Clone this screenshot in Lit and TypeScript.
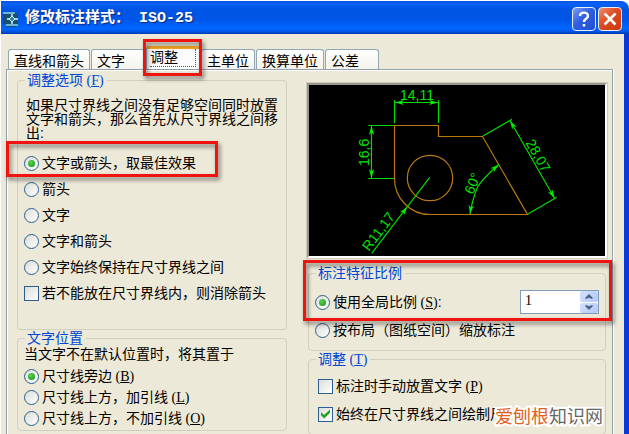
import { LitElement, html, css, svg, nothing } from "lit";
import { customElement, property, state } from "lit/decorators.js";
import { classMap } from "lit/directives/class-map.js";

interface Choice {
  label: string;
  key?: string;
  tail?: string;
}

const TABS = ["直线和箭头", "文字", "调整", "主单位", "换算单位", "公差"];

const FIT: Choice[] = [
  { label: "文字或箭头，取最佳效果" },
  { label: "箭头" },
  { label: "文字" },
  { label: "文字和箭头" },
  { label: "文字始终保持在尺寸界线之间" },
];

const PLACEMENT: Choice[] = [
  { label: "尺寸线旁边", key: "B" },
  { label: "尺寸线上方，加引线", key: "L" },
  { label: "尺寸线上方，不加引线", key: "O" },
];

const caption = (c: Choice) =>
  html`<span>${c.label}${c.key
      ? html`<span class="key"> (<u>${c.key}</u>)</span>`
      : nothing}${c.tail ?? nothing}</span>`;

const controls = css`
  * {
    box-sizing: border-box;
  }
  .key {
    font-family: "Liberation Serif", serif;
  }
  .mark {
    position: absolute;
    border: 3px solid #f01410;
    filter: drop-shadow(2px 3px 2px rgba(0, 0, 0, 0.5));
    pointer-events: none;
    z-index: 2;
  }
`;

/** Drawing with the dimensions in the current style. */
@customElement("dimension-preview")
export class DimensionPreview extends LitElement {
  static styles = css`
    :host {
      display: block;
      background: #000;
      border: 3px solid;
      border-color: #98958a #fff #fff #98958a;
      outline: 1px solid #cfccbd;
      outline-offset: -1px;
    }
    svg {
      display: block;
      width: 100%;
      height: auto;
    }
    .shape {
      fill: none;
      stroke: #b87a10;
      stroke-width: 1.2;
    }
    .dim {
      fill: none;
      stroke: #00dc00;
      stroke-width: 1.2;
    }
    .tip {
      fill: #00f000;
    }
    text {
      fill: #00e600;
      font: 14px "Liberation Sans", sans-serif;
    }
  `;

  private tip(x: number, y: number, angle: number) {
    return svg`<path class="tip" transform="translate(${x} ${y}) rotate(${angle})" d="M0 0L-9 -2.6L-6.5 0L-9 2.6Z"/>`;
  }

  render() {
    return html`<svg viewBox="-1 0 296 171" role="img" aria-label="标注预览">
      <path class="shape" d="M84.5 40.5H128.5V51.5H172.5L217.5 129.5H120A35.5 36 0 0 1 84.5 93.5Z" />
      <circle class="shape" cx="120" cy="93" r="22.7" />
      <path class="dim" d="M84.5 38V15M128.5 38V15M84.5 17.5H128.5" />
      <path class="dim" d="M84 40.5H58.5M84 93.5H58.5M61.5 40.5V93.5" />
      <path class="dim" d="M173 51L202 34.3M218 129L246.7 112.3M200 35.5L244.7 113.5" />
      <path class="dim" d="M160 129Q163 112 167.7 101.7Q175 91 189 79.5" />
      <path class="dim" d="M61.7 168.3L119.7 92.3" />
      ${this.tip(85, 17.5, 180)} ${this.tip(128, 17.5, 0)}
      ${this.tip(61.5, 41, -90)} ${this.tip(61.5, 93, 90)}
      ${this.tip(200, 35.5, -120)} ${this.tip(244.7, 113.5, 60)}
      ${this.tip(160, 129, 98)} ${this.tip(189, 79.5, -40)}
      ${this.tip(97.3, 121.7, -53)}
      <text x="90" y="15">14,11</text>
      <text transform="translate(58.5 81) rotate(-90)">16,6</text>
      <text transform="translate(224 73) rotate(60)" text-anchor="middle">28,07</text>
      <text transform="translate(163 110) rotate(-68)">60°</text>
      <text transform="translate(59 167) rotate(-53)">R11,17</text>
    </svg>`;
  }
}

/** Scale value with up and down buttons. */
@customElement("spin-box")
export class SpinBox extends LitElement {
  @property({ type: Number }) value = 1;

  static styles = css`
    :host {
      display: flex;
      width: 79px;
      height: 24px;
      border: 1px solid #7f9db9;
      background: #fff;
    }
    input {
      flex: 1;
      min-width: 0;
      padding: 0 4px 3px;
      border: 0;
      outline: 0;
      background: none;
      font: 14px "Liberation Serif", serif;
      color: #000;
    }
    .steps {
      display: grid;
      grid-template-rows: 1fr 1fr;
      gap: 1px;
      width: 18px;
    }
    button {
      display: grid;
      place-items: center;
      padding: 0;
      border: 0;
      border-radius: 2px;
      background: linear-gradient(135deg, #d3e0fd, #b4c8f6);
    }
    svg {
      width: 8px;
      height: 5px;
      fill: #4d6185;
    }
  `;

  render() {
    return html`
      <input type="text" aria-label="使用全局比例" .value=${String(this.value)} />
      <span class="steps">
        <button aria-label="增加" @click=${() => this.value++}>
          <svg viewBox="0 0 8 5"><path d="M4 0L8 4L7 5L4 3.8L1 5L0 4Z" /></svg>
        </button>
        <button aria-label="减少" @click=${() => this.value--}>
          <svg viewBox="0 0 8 5"><path d="M4 5L8 1L7 0L4 1.2L1 0L0 1Z" /></svg>
        </button>
      </span>
    `;
  }
}

@customElement("app-root")
export class AppRoot extends LitElement {
  @state() private tab = 2;

  static styles = [
    controls,
    css`
      :host {
        display: flex;
        flex-direction: column;
        position: relative;
        min-height: 100vh;
        padding: 1px 0 0 1px;
        box-sizing: border-box;
        background: #fff;
        font: 14px/16px "Liberation Sans", "Noto Sans CJK SC", sans-serif;
        color: #000;
      }
      .title {
        display: flex;
        align-items: center;
        height: 33px;
        padding: 2px 7px 0 2px;
        border-radius: 0 8px 0 0;
        background: linear-gradient(#0a4fe0 0, #0a62f5 8%, #0054e3 25%, #0055e8 55%, #0066ff 85%, #0050d8 94%, #0038b8 100%);
      }
      .logo {
        width: 16px;
        height: 16px;
      }
      h1 {
        flex: 1;
        margin: 0 0 0 6px;
        font: bold 15px/20px "Liberation Mono", "Noto Sans CJK SC", monospace;
        color: #fff;
        text-shadow: 1px 1px 1px #0a2a80;
      }
      .caption-button {
        display: grid;
        place-items: center;
        width: 24px;
        height: 24px;
        margin-left: 2px;
        padding: 0;
        border: 1px solid #e8eefc;
        border-radius: 4px;
        background: linear-gradient(135deg, #7f9ff5, #2f5fe0 45%, #2050d0);
      }
      .close {
        background: linear-gradient(135deg, #f09070, #e04a20 45%, #c83a10);
      }
      .caption-button svg {
        width: 20px;
        height: 20px;
        fill: none;
        stroke: #fff;
      }
      .body {
        flex: 1;
        display: flex;
        flex-direction: column;
        padding: 14px 11px 0 5px;
        border-right: 5px solid #0838d8;
        background: #ece9d8;
      }
      .tabs {
        display: flex;
        align-items: flex-end;
        gap: 1px;
        height: 21px;
        padding-left: 2px;
      }
      .tab {
        position: relative;
        display: block;
        min-width: 54px;
        height: 20px;
        padding: 2px 5px 0;
        border: 1px solid #91a7b4;
        border-bottom: 0;
        border-radius: 3px 3px 0 0;
        background: linear-gradient(#fff, #f4f3ec);
        font: inherit;
        line-height: 16px;
        text-align: left;
        white-space: nowrap;
        color: #000;
      }
      .tab.active {
        height: 23px;
        padding: 0 3px 6px;
        border-top: 3px solid #f5a623;
        background: #fcfcfe;
      }
      .tab .focus {
        display: block;
        height: 18px;
        border: 1px dotted #555;
        border-top: 0;
        border-left: 0;
      }
      .tab .mark {
        inset: -10px -3px -7px -4px;
      }
      .panel {
        flex: 1;
        display: grid;
        grid-template-columns: minmax(0, 270fr) minmax(0, 302fr);
        align-content: start;
        gap: 19px;
        padding: 2px 4px 0 10px;
        border: 1px solid #91a0aa;
        border-bottom: 0;
        box-shadow: inset 1px 1px #fff, 1px 0 #fff;
      }
      fieldset {
        min-width: 0;
        margin: 0;
        padding: 0 6px;
        border: 1px solid #d0d0bf;
        border-radius: 4px;
      }
      legend {
        margin-left: 1px;
        padding: 0 3px 0 2px;
        color: #0046d5;
      }
      p {
        margin: 0;
      }
      .fit p {
        padding: 9px 0 0 2px;
        line-height: 14px;
      }
      .fit .options {
        padding: 10px 0 23px;
      }
      .fit .row {
        height: 26px;
      }
      .place .row {
        height: 21px;
      }
      .place .options {
        padding: 4px 0 1px;
      }
      .row {
        position: relative;
        display: flex;
        align-items: center;
        white-space: nowrap;
      }
      .row label {
        display: flex;
        align-items: center;
        gap: 3px;
        flex: 1;
        min-width: 0;
      }
      .fit .mark {
        inset: -9px 62px -1px -18px;
      }
      input {
        flex: none;
        appearance: none;
        display: grid;
        place-items: center;
        width: 15px;
        height: 15px;
        margin: 0;
        border: 1px solid #2b5f92;
        background: linear-gradient(135deg, #dcdcd7, #fff);
      }
      input[type="radio"] {
        border-radius: 50%;
      }
      input[type="radio"]:checked::before {
        content: "";
        width: 7px;
        height: 7px;
        border-radius: 50%;
        background: radial-gradient(circle at 40% 35%, #55d551, #129010);
      }
      input[type="checkbox"]:checked::before {
        content: "";
        width: 9px;
        height: 9px;
        background: #21a121;
        clip-path: polygon(0 30%, 35% 62%, 100% 0, 100% 35%, 35% 100%, 0 65%);
      }
      .right {
        display: flex;
        flex-direction: column;
      }
      dimension-preview {
        margin-top: 10px;
      }
      .right fieldset {
        margin: 0 2px;
      }
      .scale {
        position: relative;
      }
      .right .scale {
        margin-top: 6px;
      }
      .scale .options {
        padding: 7px 0 6px;
      }
      .scale .row {
        height: 28px;
      }
      .scale .mark {
        inset: -21px -7px 29px -6px;
      }
      .adjust .options {
        padding: 4px 0 6px 3px;
      }
      .adjust .row {
        height: 28px;
      }
      .watermark {
        position: absolute;
        right: 26px;
        bottom: 9px;
        font: 18px/22px "Noto Sans CJK SC", sans-serif;
        color: #666;
        -webkit-text-stroke: 4px #fff;
        paint-order: stroke fill;
      }
      .watermark b {
        font-weight: 400;
        color: #e2611c;
      }
    `,
  ];

  private radio(group: string, c: Choice, checked: boolean) {
    return html`<label>
      <input type="radio" name=${group} ?checked=${checked} />${caption(c)}
    </label>`;
  }

  private check(c: Choice, checked: boolean) {
    return html`<div class="row">
      <label><input type="checkbox" ?checked=${checked} />${caption(c)}</label>
    </div>`;
  }

  render() {
    return html`
      <header class="title">
        <svg class="logo" viewBox="0 0 16 16" aria-hidden="true">
          <path d="M0 1H12L15 4V13L13 16H3V13H0Z" fill="#16506e" />
          <path d="M0 1H12V3H0ZM3 13H15V15H3Z" fill="#6fb3cc" />
          <path d="M9 3V13M4 8H15" stroke="#d8f6ff" stroke-width="1.4" />
          <path d="M9 5L12 8L9 11L6 8Z" fill="#2a83a8" stroke="#d8f6ff" />
        </svg>
        <h1>修改标注样式：&nbsp;ISO-25</h1>
        <button class="caption-button" aria-label="帮助">
          <svg viewBox="0 0 20 20">
            <path d="M6 7C6 2.5 14 2.5 14 7C14 9.5 10 9.5 10 13M10 15V17.5" stroke-width="2.4" />
          </svg>
        </button>
        <button class="caption-button close" aria-label="关闭">
          <svg viewBox="0 0 20 20"><path d="M4.5 4.5L15.5 15.5M15.5 4.5L4.5 15.5" stroke-width="2.6" /></svg>
        </button>
      </header>
      <main class="body">
        <div class="tabs" role="tablist">
          ${TABS.map(
            (name, i) => html`<button
              role="tab"
              aria-selected=${i === this.tab}
              class=${classMap({ tab: true, active: i === this.tab })}
              @click=${() => (this.tab = i)}
            >${i === this.tab
              ? html`<span class="focus">${name}</span><span class="mark"></span>`
              : name}</button>`
          )}
        </div>
        <section class="panel" role="tabpanel">
          <div class="left">
            <fieldset class="fit">
              <legend>${caption({ label: "调整选项", key: "F" })}</legend>
              <p>如果尺寸界线之间没有足够空间同时放置文字和箭头，那么首先从尺寸界线之间移出:</p>
              <div class="options">
                ${FIT.map(
                  (c, i) => html`<div class="row">
                    ${this.radio("fit", c, i === 0)}
                    ${i === 0 ? html`<span class="mark"></span>` : nothing}
                  </div>`
                )}
                ${this.check({ label: "若不能放在尺寸界线内，则消除箭头" }, false)}
              </div>
            </fieldset>
            <fieldset class="place">
              <legend>文字位置</legend>
              <p>当文字不在默认位置时，将其置于</p>
              <div class="options">
                ${PLACEMENT.map(
                  (c, i) => html`<div class="row">${this.radio("place", c, i === 0)}</div>`
                )}
              </div>
            </fieldset>
          </div>
          <div class="right">
            <dimension-preview></dimension-preview>
            <fieldset class="scale">
              <legend>标注特征比例</legend>
              <div class="options">
                <div class="row">
                  ${this.radio("scale", { label: "使用全局比例", key: "S", tail: ":" }, true)}
                  <spin-box></spin-box>
                </div>
                <div class="row">
                  ${this.radio("scale", { label: "按布局（图纸空间）缩放标注" }, false)}
                </div>
              </div>
              <span class="mark"></span>
            </fieldset>
            <fieldset class="adjust">
              <legend>${caption({ label: "调整", key: "T" })}</legend>
              <div class="options">
                ${this.check({ label: "标注时手动放置文字", key: "P" }, false)}
                ${this.check({ label: "始终在尺寸界线之间绘制尺" }, true)}
              </div>
            </fieldset>
          </div>
        </section>
      </main>
      <div class="watermark"><b>爱刨根</b>知识网</div>
    `;
  }
}
